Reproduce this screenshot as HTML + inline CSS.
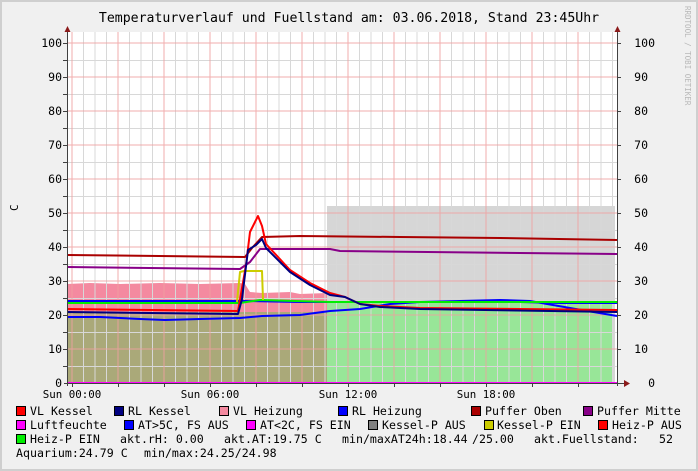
<!DOCTYPE html>
<html><head><meta charset="utf-8"><style>
html,body{margin:0;padding:0;background:#f0f0f0;}
svg{display:block;}
text{font-family:"DejaVu Sans Mono","Liberation Mono",monospace;}
</style></head><body>
<svg width="698" height="471" viewBox="0 0 698 471" xmlns="http://www.w3.org/2000/svg">
<rect x="0" y="0" width="698" height="471" fill="#cfcfcf"/>
<rect x="2" y="2" width="694" height="467" fill="#f0f0f0"/>
<rect x="67" y="32" width="550" height="351" fill="#ffffff"/>
<!-- areas -->
<path d="M67,284 L90,283 L120,284 L160,283 L200,284 L240,283 L245,284 L250,292 L262,293 L290,292 L300,294 L327,293 L327,383 L67,383 Z" fill="#f48aa0"/>
<rect x="327" y="206" width="288" height="177" fill="#d6d6d6"/>
<rect x="327" y="301" width="285" height="82" fill="#98e698"/>
<rect x="67" y="312" width="260" height="71" fill="#aaa979"/>
<!-- grid -->
<g stroke="#d8d8d8" stroke-width="1">
<path d="M83.5,32V383M95,32V383M106.5,32V383M129.5,32V383M141,32V383M152.5,32V383M175.5,32V383M187,32V383M198.5,32V383M221.5,32V383M233,32V383M244.5,32V383M267.5,32V383M279,32V383M290.5,32V383M313.5,32V383M325,32V383M336.5,32V383M359.5,32V383M371,32V383M382.5,32V383M405.5,32V383M417,32V383M428.5,32V383M451.5,32V383M463,32V383M474.5,32V383M497.5,32V383M509,32V383M520.5,32V383M543.5,32V383M555,32V383M566.5,32V383M589.5,32V383M601,32V383M612.5,32V383"/>
<path d="M67,366.5H617M67,332.5H617M67,298.5H617M67,264.5H617M67,230.5H617M67,196.5H617M67,162.5H617M67,128.5H617M67,94.5H617M67,60.5H617"/>
</g>
<g stroke="#f0a0a0" stroke-width="1" opacity="0.85">
<path d="M72,32V383M118,32V383M164,32V383M210,32V383M256,32V383M302,32V383M348,32V383M394,32V383M440,32V383M486,32V383M532,32V383M578,32V383"/>
<path d="M67,349H617M67,315H617M67,281H617M67,247H617M67,213H617M67,179H617M67,145H617M67,111H617M67,77H617M67,43H617"/>
</g>
<!-- lines -->
<g fill="none" stroke-width="2" stroke-linejoin="round">
<path d="M67,301 L240,301 L245,301 L300,302 L400,302 L520,302 L560,303 L617,303" stroke="#0000ff"/>
<path d="M67,317 L100,317 L140,319 L165,320 L200,319 L240,318 L262,316 L300,315 L330,311 L360,309 L390,304 L420,302 L500,300 L530,301 L570,308 L617,316" stroke="#0000ff"/>
<path d="M67,303 L240,303 L260,300 L330,302 L617,302" stroke="#00ee00"/>
<path d="M237,302 L240,272 L244,271 L262,271 L263,300" stroke="#cccc00"/>
<path d="M67,255 L245,257 L252,248 L262,237 L300,236 L400,237 L500,238 L617,240" stroke="#aa0000"/>
<path d="M67,267 L240,269 L250,262 L260,249 L330,249 L340,251 L617,254" stroke="#880088"/>
<path d="M67,309 L238,311 L246,265 L250,232 L258,216 L262,226 L266,244 L290,270 L310,283 L330,293 L345,297 L360,304 L380,306 L420,308 L617,310" stroke="#ff0000"/>
<path d="M67,312 L238,314 L242,299 L248,250 L256,245 L262,239 L266,248 L290,272 L310,285 L330,295 L345,297 L360,304 L380,307 L420,309 L617,312" stroke="#000080"/>
</g>
<line x1="67" y1="383" x2="617" y2="383" stroke="#ff00ff" stroke-width="2"/>
<!-- axes -->
<g stroke="#404040" stroke-width="1">
<path d="M67.5,30V386M617.5,30V386M64,383.5H624"/>
<path d="M63,366.5H67M63,349.5H67M63,332.5H67M63,315.5H67M63,298.5H67M63,281.5H67M63,264.5H67M63,247.5H67M63,230.5H67M63,213.5H67M63,196.5H67M63,179.5H67M63,162.5H67M63,145.5H67M63,128.5H67M63,111.5H67M63,94.5H67M63,77.5H67M63,60.5H67M63,43.5H67"/>
<path d="M617,349.5H621M617,315.5H621M617,281.5H621M617,247.5H621M617,213.5H621M617,179.5H621M617,145.5H621M617,111.5H621M617,77.5H621M617,43.5H621"/>
<path d="M72.5,383V387M118.5,383V387M164.5,383V387M210.5,383V387M256.5,383V387M302.5,383V387M348.5,383V387M394.5,383V387M440.5,383V387M486.5,383V387M532.5,383V387M578.5,383V387"/>
</g>
<path d="M64.5,32 L67.5,26 L70.5,32Z M614.5,32 L617.5,26 L620.5,32Z M624,380 L630,383.5 L624,387Z" fill="#8b1a1a"/>
<!-- title -->
<text x="349" y="22" font-size="13.2" text-anchor="middle" fill="#000">Temperaturverlauf und Fuellstand am: 03.06.2018, Stand 23:45Uhr</text>
<text transform="translate(685,6) rotate(90)" font-size="7.5" fill="#b8b8b8">RRDTOOL / TOBI OETIKER</text>
<text transform="translate(18,211) rotate(-90)" font-size="11" fill="#000">C</text>
<g font-size="11.5" fill="#000" text-anchor="end">
<text x="62" y="47">100</text><text x="62" y="81">90</text><text x="62" y="115">80</text><text x="62" y="149">70</text><text x="62" y="183">60</text><text x="62" y="217">50</text><text x="62" y="251">40</text><text x="62" y="285">30</text><text x="62" y="319">20</text><text x="62" y="353">10</text><text x="62" y="387">0</text>
</g>
<g font-size="11.5" fill="#000" text-anchor="end">
<text x="655" y="47">100</text><text x="648" y="81">90</text><text x="648" y="115">80</text><text x="648" y="149">70</text><text x="648" y="183">60</text><text x="648" y="217">50</text><text x="648" y="251">40</text><text x="648" y="285">30</text><text x="648" y="319">20</text><text x="648" y="353">10</text><text x="655" y="387">0</text>
</g>
<g font-size="10.8" fill="#000" text-anchor="middle">
<text x="72" y="398">Sun 00:00</text><text x="210" y="398">Sun 06:00</text><text x="348" y="398">Sun 12:00</text><text x="486" y="398">Sun 18:00</text>
</g>
<!-- legend -->
<g stroke="#000" stroke-width="1">
<rect x="16.5" y="406.5" width="9" height="9" fill="#ff0000"/>
<rect x="114.5" y="406.5" width="9" height="9" fill="#000080"/>
<rect x="219.5" y="406.5" width="9" height="9" fill="#f48aa0"/>
<rect x="338.5" y="406.5" width="9" height="9" fill="#0000ff"/>
<rect x="471.5" y="406.5" width="9" height="9" fill="#aa0000"/>
<rect x="583.5" y="406.5" width="9" height="9" fill="#880088"/>
<rect x="16.5" y="420.5" width="9" height="9" fill="#ff00ff"/>
<rect x="124.5" y="420.5" width="9" height="9" fill="#0000ff"/>
<rect x="246.5" y="420.5" width="9" height="9" fill="#ff00ff"/>
<rect x="368.5" y="420.5" width="9" height="9" fill="#808080"/>
<rect x="484.5" y="420.5" width="9" height="9" fill="#cccc00"/>
<rect x="598.5" y="420.5" width="9" height="9" fill="#ff0000"/>
<rect x="16.5" y="434.5" width="9" height="9" fill="#00ee00"/>
</g>
<g font-size="11.6" fill="#000">
<text x="30" y="415">VL Kessel</text><text x="128" y="415">RL Kessel</text><text x="233" y="415">VL Heizung</text><text x="352" y="415">RL Heizung</text><text x="485" y="415">Puffer Oben</text><text x="597" y="415">Puffer Mitte</text>
<text x="30" y="429">Luftfeuchte</text><text x="138" y="429">AT&gt;5C, FS AUS</text><text x="260" y="429">AT&lt;2C, FS EIN</text><text x="382" y="429">Kessel-P AUS</text><text x="497" y="429">Kessel-P EIN</text><text x="612" y="429">Heiz-P AUS</text>
<text x="30" y="443">Heiz-P EIN</text><text x="120" y="443">akt.rH: 0.00</text><text x="224" y="443">akt.AT:19.75 C</text><text x="342" y="443">min/maxAT24h:18.44</text><text x="472" y="443">/25.00</text><text x="534" y="443">akt.Fuellstand:</text><text x="659" y="443">52</text>
<text x="16" y="457">Aquarium:24.79 C</text><text x="144" y="457">min/max:24.25/24.98</text>
</g>
</svg>
</body></html>
